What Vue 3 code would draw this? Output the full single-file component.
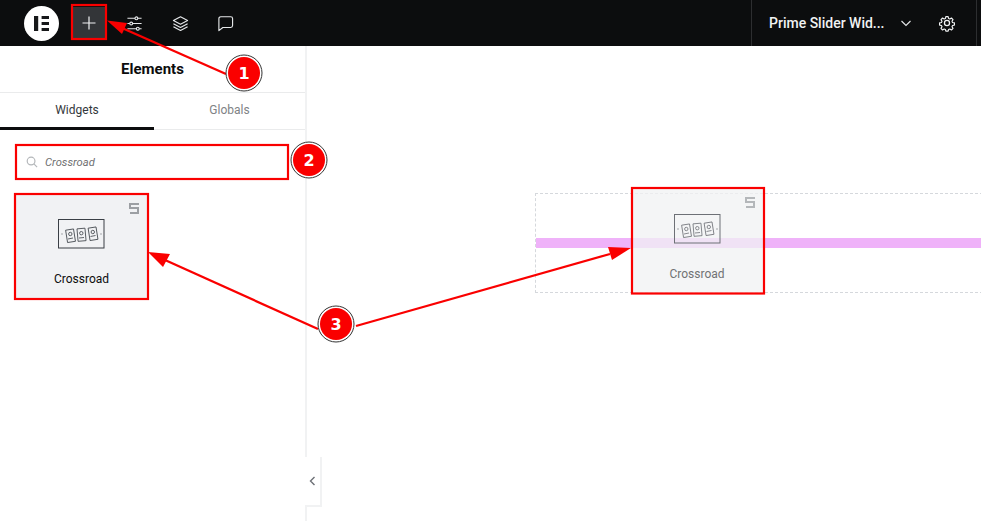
<template>
  <div class="editor">
    <header class="topbar">
      <div class="topbar-left">
        <div class="logo">
          <svg width="35" height="35" viewBox="0 0 35 35">
            <circle cx="17.5" cy="17.5" r="17.5" fill="#fff" />
            <rect x="10" y="10" width="4.2" height="15" fill="#17181a" />
            <rect x="17.6" y="10" width="7.4" height="3" fill="#17181a" />
            <rect x="17.6" y="16" width="7.4" height="3" fill="#17181a" />
            <rect x="17.6" y="22" width="7.4" height="3" fill="#17181a" />
          </svg>
        </div>
        <button class="tool active">
          <svg width="18" height="18" viewBox="0 0 18 18" fill="none" stroke="#f1f2f3" stroke-width="1.2">
            <path d="M9 2.5v13M2.5 9h13" />
          </svg>
        </button>
        <button class="tool">
          <svg width="17" height="17" viewBox="0 0 18 18" fill="none" stroke="#e6e8ea" stroke-width="1.2">
            <path d="M1.5 3.5h8M12.5 3.5h4M1.5 9H4M7 9h9.5M1.5 14.5H11M14 14.5h2.5" />
            <circle cx="11" cy="3.5" r="1.5" />
            <circle cx="5.5" cy="9" r="1.5" />
            <circle cx="12.5" cy="14.5" r="1.5" />
          </svg>
        </button>
        <button class="tool">
          <svg width="17" height="17" viewBox="0 0 18 18" fill="none" stroke="#e6e8ea" stroke-width="1.2" stroke-linejoin="round">
            <path d="M9 1.8 16.5 5.8 9 9.8 1.5 5.8Z" />
            <path d="M1.5 9.2 9 13.2 16.5 9.2" />
            <path d="M1.5 12.4 9 16.4 16.5 12.4" />
          </svg>
        </button>
        <button class="tool">
          <svg width="17" height="17" viewBox="0 0 18 18" fill="none" stroke="#e6e8ea" stroke-width="1.2" stroke-linejoin="round">
            <path d="M4 1.8h10.5a2 2 0 0 1 2 2v7.4a2 2 0 0 1-2 2H6.2L2 16.5V3.8a2 2 0 0 1 2-2Z" />
          </svg>
        </button>
      </div>
      <div class="topbar-right">
        <span class="site-name">Prime Slider Wid...</span>
        <svg class="chevron" width="10" height="7" viewBox="0 0 10 7" fill="none" stroke="#e6e8ea" stroke-width="1.1">
          <path d="M.5 1 5 5.5 9.5 1" />
        </svg>
        <svg class="gear" width="18" height="18" viewBox="0 0 24 24" fill="none" stroke="#f1f2f3" stroke-width="1.7" stroke-linejoin="round">
          <path d="M10.3 2.5h3.4l.6 2.8 1.9.8 2.4-1.5 2.3 2.4-1.5 2.4.8 1.9 2.8.6v3.2l-2.8.6-.8 1.9 1.5 2.4-2.3 2.4-2.4-1.5-1.9.8-.6 2.3h-3.4l-.6-2.3-1.9-.8-2.4 1.5-2.3-2.4 1.5-2.4-.8-1.9-2.8-.6v-3.2l2.8-.6.8-1.9-1.5-2.4 2.3-2.4 2.4 1.5 1.9-.8Z" transform="translate(1.2 1.2) scale(.9)" />
          <circle cx="12" cy="12" r="3.4" />
        </svg>
      </div>
    </header>

    <div class="body">
      <aside class="sidebar">
        <div class="panel-title">Elements</div>
        <div class="tabs">
          <div class="tab selected">Widgets</div>
          <div class="tab">Globals</div>
        </div>
        <div class="search">
          <svg width="12" height="12" viewBox="0 0 13 13" fill="none" stroke="#b4b7ba" stroke-width="1.3">
            <circle cx="5.5" cy="5.5" r="4.2" />
            <path d="M8.6 8.6 12 12" />
          </svg>
          <span>Crossroad</span>
        </div>
        <div class="widget">
          <svg class="pro" width="10" height="11" viewBox="0 0 10 11" fill="none" stroke="#9c9fa3" stroke-width="2">
            <path d="M10 1H1v4h8v5H1" />
          </svg>
          <svg class="widget-icon" width="47" height="30" viewBox="0 0 47 30">
            <use href="#crossroad-icon" />
          </svg>
          <div class="widget-name">Crossroad</div>
        </div>
        <button class="collapse">
          <svg width="7" height="10" viewBox="0 0 7 10" fill="none" stroke="#6d7076" stroke-width="1.4">
            <path d="M5.5 1 1.5 5l4 4" />
          </svg>
        </button>
      </aside>

      <main class="canvas">
        <div class="dropzone">
          <div class="drop-line"></div>
        </div>
        <div class="widget dragged">
          <svg class="pro" width="10" height="11" viewBox="0 0 10 11" fill="none" stroke="#b4b7ba" stroke-width="2">
            <path d="M10 1H1v4h8v5H1" />
          </svg>
          <svg class="widget-icon" width="47" height="30" viewBox="0 0 47 30">
            <use href="#crossroad-icon" />
          </svg>
          <div class="widget-name">Crossroad</div>
        </div>
      </main>
    </div>

    <!-- Screenshot annotations -->
    <svg class="annotations" width="981" height="521" viewBox="0 0 981 521">
      <defs>
        <g id="crossroad-icon" fill="none">
          <rect x=".5" y=".5" width="45.5" height="28.5" stroke="currentColor" stroke-width="1" />
          <path d="M3 15h2M42 15h2" stroke="#a4a7ab" stroke-width="1" />
          <g stroke="currentColor" stroke-width=".8">
            <rect x="8.5" y="10.5" width="8" height="12.5" transform="rotate(-9 12.5 16.5)" />
            <rect x="19.5" y="9.5" width="8" height="12.5" transform="rotate(-5 23.5 15.5)" />
            <rect x="31" y="8.5" width="8" height="12.5" transform="rotate(-9 35 14.5)" />
            <path d="M10 20l5-1M21 19l5-.5M32.5 17.5l5-1" />
            <circle cx="12.3" cy="15" r="1.7" />
            <circle cx="23.3" cy="14.2" r="1.7" />
            <circle cx="34.8" cy="13" r="1.7" />
          </g>
        </g>
      </defs>
      <g fill="none" stroke="#fa0000" stroke-width="2.2">
        <rect x="72" y="5" width="34" height="34" />
        <rect x="16" y="145" width="272" height="34" />
        <rect x="15" y="194" width="133" height="105" />
        <rect x="632" y="188" width="132" height="105.5" />
      </g>
      <g stroke="#fa0000" stroke-width="2.3" fill="#fa0000">
        <line x1="226" y1="74" x2="122" y2="28" />
        <line x1="318" y1="329" x2="165" y2="260" />
        <line x1="356" y1="326" x2="610" y2="254" />
      </g>
      <g fill="#fa0000">
        <polygon points="107,20.5 127,23 122,34" />
        <polygon points="148,252 170,254 163,267" />
        <polygon points="631,248 608,247 612,260" />
      </g>
      <g v-for="m in markers" :key="m.n">
        <circle :cx="m.x" :cy="m.y" r="18" fill="#fff" stroke="#333" stroke-width="1" />
        <circle :cx="m.x" :cy="m.y" r="16" fill="#fa0000" />
        <text :x="m.x" :y="m.y + 6" class="marker-text" text-anchor="middle">{{ m.n }}</text>
      </g>
    </svg>
  </div>
</template>

<script setup>
const markers = [
  { n: 1, x: 244, y: 73 },
  { n: 2, x: 309, y: 160 },
  { n: 3, x: 336, y: 324 }
]
</script>

<style scoped>
.editor {
  position: relative;
  width: 981px;
  height: 521px;
  overflow: hidden;
  background: #fff;
  font-family: Roboto, "Liberation Sans", sans-serif;
}

.topbar {
  display: flex;
  justify-content: space-between;
  height: 46px;
  background: #0c0d0e;
}

.topbar-left {
  display: flex;
  align-items: center;
  padding-left: 24px;
}

.logo {
  display: flex;
  width: 35px;
  height: 35px;
  margin-right: 14px;
}

.tool {
  display: flex;
  align-items: center;
  justify-content: center;
  width: 32px;
  height: 32px;
  margin-right: 13.5px;
  padding: 0;
  border: 0;
  background: none;
}

.tool.active {
  background: #333538;
}

.topbar-right {
  display: flex;
  align-items: center;
  width: 226px;
  margin-right: 4px;
  padding-left: 17px;
  border-left: 1px solid #2d2e30;
  border-right: 1px solid #2d2e30;
  box-sizing: border-box;
}

.site-name {
  width: 115px;
  color: #f1f2f3;
  font-size: 14px;
  font-weight: 500;
  white-space: nowrap;
}

.chevron {
  margin-left: 17px;
}

.gear {
  margin-left: 27px;
}

.body {
  display: flex;
  height: 475px;
}

.sidebar {
  position: relative;
  flex: 0 0 307px;
  box-sizing: border-box;
  border-right: 2px solid #f1f2f3;
}

.panel-title {
  height: 47px;
  padding-top: 14px;
  box-sizing: border-box;
  border-bottom: 1px solid #eaebec;
  color: #0c0d0e;
  font-size: 15px;
  font-weight: 700;
  text-align: center;
}

.tabs {
  display: flex;
  height: 36px;
  border-bottom: 1px solid #eaebec;
}

.tab {
  flex: 1;
  padding-top: 10px;
  box-sizing: border-box;
  color: #808285;
  font-size: 12px;
  text-align: center;
}

.tab.selected {
  flex: 0 0 154px;
  border-bottom: 3px solid #0c0d0e;
  margin-bottom: -1px;
  color: #33373b;
}

.search {
  display: flex;
  align-items: center;
  gap: 7px;
  height: 34px;
  margin: 15px 17px 0 26px;
  color: #6f7072;
  font-size: 11.2px;
  font-style: italic;
}

.widget {
  display: flex;
  flex-direction: column;
  align-items: center;
  position: relative;
  box-sizing: border-box;
  width: 133px;
  height: 105px;
  margin: 15px 0 0 15px;
  background: #f1f2f4;
  color: #3a3f45;
}

.widget-icon {
  margin-top: 25px;
}

.widget-name {
  margin-top: 23px;
  font-size: 12px;
  color: #0c0d0e;
}

.pro {
  position: absolute;
  top: 9px;
  right: 9px;
}

.collapse {
  position: absolute;
  top: 411px;
  right: -17px;
  width: 17px;
  height: 50px;
  padding: 0;
  border: 0;
  border-right: 2px solid #f1f2f3;
  border-bottom: 2px solid #f1f2f3;
  background: #fff;
}

.canvas {
  position: relative;
  flex: 1;
  padding: 147px 0 0 228px;
}

.dropzone {
  height: 100px;
  margin-right: -2px;
  border: 1px dashed #d5d8dc;
  padding-top: 44px;
  box-sizing: border-box;
}

.drop-line {
  height: 10px;
  background: #efb2f9;
}

.widget.dragged {
  position: absolute;
  left: 325px;
  top: 142px;
  margin: 0;
  width: 132px;
  padding-right: 2px;
  background: rgba(240, 241, 243, 0.75);
  color: #6d7076;
}

.widget.dragged .widget-icon {
  margin-top: 26px;
}

.widget.dragged .widget-name {
  color: #707274;
}

.annotations {
  position: absolute;
  top: 0;
  left: 0;
}

.marker-text {
  fill: #fff;
  font-family: "DejaVu Sans", sans-serif;
  font-size: 16px;
  font-weight: 700;
}
</style>
